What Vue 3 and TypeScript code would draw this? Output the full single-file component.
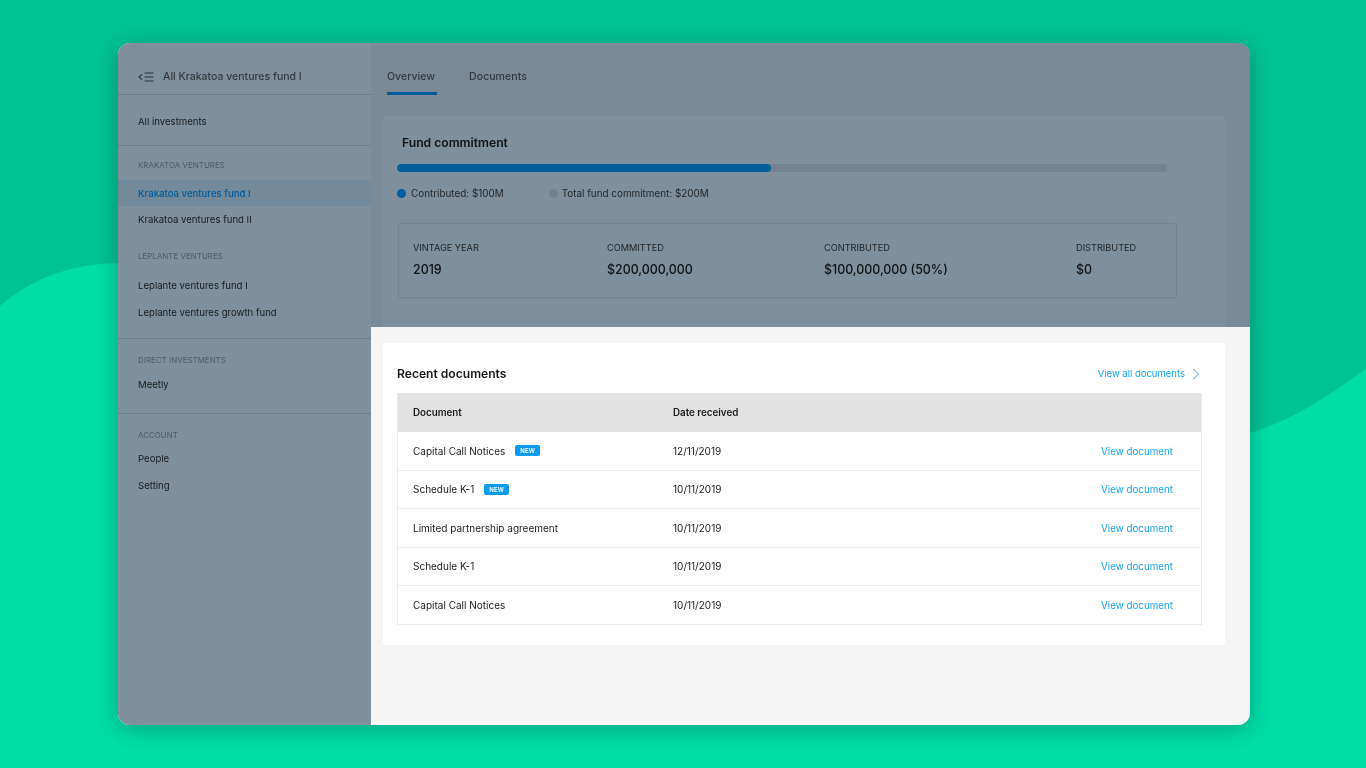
<script setup lang="ts">
// fund overview with the recent documents card highlighted
interface Doc { name: string; date: string; isNew?: boolean }

const sections = [
  { label: 'Krakatoa ventures', items: ['Krakatoa ventures fund I', 'Krakatoa ventures fund II'] },
  { label: 'Leplante ventures', items: ['Leplante ventures fund I', 'Leplante ventures growth fund'] },
  { label: 'Direct investments', items: ['Meetly'] },
  { label: 'Account', items: ['People', 'Setting'] },
];

const stats = [
  { label: 'Vintage year', value: '2019' },
  { label: 'Committed', value: '$200,000,000' },
  { label: 'Contributed', value: '$100,000,000 (50%)' },
  { label: 'Distributed', value: '$0' },
];

const docs: Doc[] = [
  { name: 'Capital Call Notices', date: '12/11/2019', isNew: true },
  { name: 'Schedule K-1', date: '10/11/2019', isNew: true },
  { name: 'Limited partnership agreement', date: '10/11/2019' },
  { name: 'Schedule K-1', date: '10/11/2019' },
  { name: 'Capital Call Notices', date: '10/11/2019' },
];
</script>

<template>
  <div class="page">
    <svg class="blob" width="1366" height="768" viewBox="0 0 1366 768">
      <path d="M0 0H1366V368C1330 396 1292 420 1250 433C1000 500 500 300 118 263C65 264 28 282 0 306Z" fill="#00c392" />
    </svg>
    <div class="window">
      <aside class="sidebar">
        <div class="side-head">
          <svg width="16" height="10" viewBox="0 0 16 10" fill="none" stroke="#555" stroke-width="1.1">
            <path d="M4 2.4L1 5l3 2.6" />
            <path d="M6.5 1H15.5M6.5 5H15.5M6.5 9H15.5" />
          </svg>
          <span>All Krakatoa ventures fund I</span>
        </div>
        <div class="side-all">All investments</div>
        <div v-for="(sec, i) in sections" :key="sec.label" class="side-section" :class="'sec-' + i">
          <div class="side-label">{{ sec.label }}</div>
          <div
            v-for="item in sec.items"
            :key="item"
            class="side-item"
            :class="{ active: item === 'Krakatoa ventures fund I' }"
          >{{ item }}</div>
        </div>
      </aside>
      <main class="main">
        <section class="top">
          <nav class="tabs">
            <a class="tab on">Overview</a>
            <a class="tab">Documents</a>
          </nav>
          <div class="fund-card">
            <h2>Fund commitment</h2>
            <div class="bar"><div class="bar-fill" :style="{ width: '48.6%' }"></div></div>
            <div class="legend">
              <span class="leg"><i class="dot blue"></i>Contributed: $100M</span>
              <span class="leg"><i class="dot grey"></i>Total fund commitment: $200M</span>
            </div>
            <div class="stats">
              <div v-for="s in stats" :key="s.label" class="stat">
                <div class="stat-label">{{ s.label }}</div>
                <div class="stat-value">{{ s.value }}</div>
              </div>
            </div>
          </div>
        </section>
        <section class="bottom">
          <div class="docs-card">
            <div class="docs-head">
              <h2>Recent documents</h2>
              <a class="all-link">View all documents
                <svg width="8" height="12" viewBox="0 0 8 12" fill="none" stroke="#3f9fd8" stroke-width="1">
                  <path d="M1 .8L6.6 6 1 11.2" />
                </svg>
              </a>
            </div>
            <div class="table">
              <div class="row head">
                <span>Document</span>
                <span class="head-date">Date received</span>
                <span></span>
              </div>
              <div v-for="(d, i) in docs" :key="i" class="row">
                <span class="doc-name">{{ d.name }}<em v-if="d.isNew" class="badge">NEW</em></span>
                <span>{{ d.date }}</span>
                <a class="view">View document</a>
              </div>
            </div>
          </div>
        </section>
      </main>
    </div>
  </div>
</template>

<style>
html, body { margin: 0; }
</style>

<style scoped>
.page {
  position: relative;
  width: 1366px;
  height: 768px;
  overflow: hidden;
  box-sizing: border-box;
  padding: 43px 116px 43px 118px;
  background: #00dea6;
  font-family: Inter, "Liberation Sans", sans-serif;
  color: #1f1f1f;
}
.blob { position: absolute; left: 0; top: 0; }
.window {
  position: relative;
  display: flex;
  height: 682px;
  border-radius: 12px;
  overflow: hidden;
  background: #f5f5f5;
  box-shadow: 0 4px 22px rgba(0, 40, 40, 0.32);
}
.sidebar {
  position: relative;
  width: 253px;
  flex: none;
  background: #fff;
  font-size: 9.6px;
}
/* dim layer over everything except the highlighted card */
.sidebar::after, .top::after {
  content: "";
  position: absolute;
  inset: 0;
  background: #7f909c;
  mix-blend-mode: multiply;
}
.side-head {
  display: flex;
  align-items: center;
  gap: 9px;
  height: 52px;
  padding: 15px 20px 0;
  box-sizing: border-box;
  border-bottom: 1px solid #d8d8d8;
  font-size: 10.5px;
  font-weight: 500;
  color: #666;
}
.side-head svg { margin-top: 1px; }
.side-all {
  height: 50px;
  line-height: 53px;
  padding-left: 20px;
  border-bottom: 1px solid #dcdcdc;
  color: #333;
}
.side-section { padding-top: 13px; }
.sec-1 { padding-top: 18px; padding-bottom: 12px; border-bottom: 1px solid #dcdcdc; }
.sec-2 { padding-top: 15px; padding-bottom: 14.5px; border-bottom: 1px solid #dcdcdc; }
.sec-3 { padding-top: 15px; }
.side-label {
  height: 13px;
  line-height: 13px;
  margin-bottom: 8px;
  padding-left: 20px;
  font-size: 7.8px;
  letter-spacing: 0.1px;
  text-transform: uppercase;
  color: #a0a0a0;
}
.sec-1 .side-label { margin-bottom: 9px; }
.sec-2 .side-label { margin-bottom: 4px; }
.sec-3 .side-label { margin-bottom: 3px; }
.side-item {
  height: 27px;
  line-height: 27px;
  padding-left: 20px;
  color: #333;
}
.sec-0 .side-item { height: 26px; line-height: 28px; }
.side-item.active {
  background: #e6f5ff;
  color: #00a0ff;
  font-weight: 500;
}
.main {
  flex: 1;
  min-width: 0;
  display: flex;
  flex-direction: column;
}
.top {
  position: relative;
  height: 284px;
  flex: none;
  overflow: hidden;
  box-sizing: border-box;
  padding: 0 25px 0 12px;
}
.tabs {
  display: flex;
  gap: 32px;
  height: 52px;
  margin: 0 0 21px 4px;
}
.tab {
  height: 49px;
  padding: 0 2px 0 0;
  line-height: 67px;
  font-size: 10.6px;
  font-weight: 500;
  color: #666;
}
.tab.on { border-bottom: 3px solid #00a0ff; }
.fund-card {
  background: #fff;
  border-radius: 3px;
  height: 260px;
  box-sizing: border-box;
  padding: 19px 58px 0 14px;
}
.fund-card h2 {
  margin: 0 0 13px 5px;
  font-size: 12.15px;
  line-height: 16px;
  font-weight: 600;
  color: #222;
}
.bar { height: 8px; border-radius: 4px; background: #e8e8e8; overflow: hidden; }
.bar-fill { height: 100%; border-radius: 4px; background: #00a8ff; }
.legend {
  display: flex;
  gap: 45px;
  margin-top: 15px;
  font-size: 9.88px;
  line-height: 13px;
  color: #444;
}
.leg { display: flex; align-items: center; gap: 5px; }
.leg:last-child { gap: 4px; }
.dot { width: 9px; height: 9px; border-radius: 50%; display: block; }
.dot.blue { background: #00a8ff; }
.dot.grey { background: #e4e4e4; }
.stats {
  display: grid;
  grid-template-columns: 194px 217px 252px 1fr;
  height: 75px;
  box-sizing: border-box;
  margin: 23px -10px 0 1px;
  padding: 17px 14px 0;
  border: 1px solid #e8e8e8;
  border-radius: 3px;
  box-shadow: 0 1px 2px rgba(0, 0, 0, 0.06);
}
.stat-label {
  font-size: 9.2px;
  line-height: 13px;
  text-transform: uppercase;
  color: #444;
}
.stat-value {
  margin-top: 8px;
  font-size: 12.4px;
  line-height: 16px;
  font-weight: 500;
  color: #222;
}
.bottom { flex: 1; padding: 16px 25px 0 12px; }
.docs-card {
  height: 302px;
  box-sizing: border-box;
  padding: 0 23px 0 14px;
  background: #fff;
  border-radius: 3px;
}
.docs-head {
  display: flex;
  align-items: center;
  justify-content: space-between;
  height: 50px;
  padding: 10px 2px 0 0;
  box-sizing: border-box;
}
.docs-head h2 {
  margin: 0;
  font-size: 12.1px;
  font-weight: 600;
  color: #1a1a1a;
}
.all-link {
  display: flex;
  align-items: center;
  gap: 7px;
  margin-top: 1px;
  font-size: 9.5px;
  color: #14a5f7;
}
.table { border-right: 1px solid #ececec; border-left: 1px solid #ececec; }
.row {
  display: grid;
  grid-template-columns: 260px 1fr auto;
  align-items: center;
  height: 38.5px;
  box-sizing: border-box;
  padding: 0 28px 0 15px;
  border-bottom: 1px solid #ececec;
  font-size: 10px;
  color: #222;
}
.row.head {
  height: 39px;
  background: #e2e2e2;
  border-bottom: 0;
  font-size: 9.8px;
  font-weight: 600;
  color: #1a1a1a;
}
.head-date { margin-top: -1px; }
.doc-name { display: flex; align-items: center; }
.badge {
  display: block;
  margin-left: 10px;
  padding: 0 5px;
  height: 11px;
  line-height: 11px;
  border-radius: 2px;
  background: #0d9bf2;
  color: #fff;
  font-size: 6px;
  font-style: normal;
  font-weight: 600;
  letter-spacing: 0.2px;
}
.view { margin-top: 1px; color: #14a5f7; font-size: 9.8px; }
</style>
